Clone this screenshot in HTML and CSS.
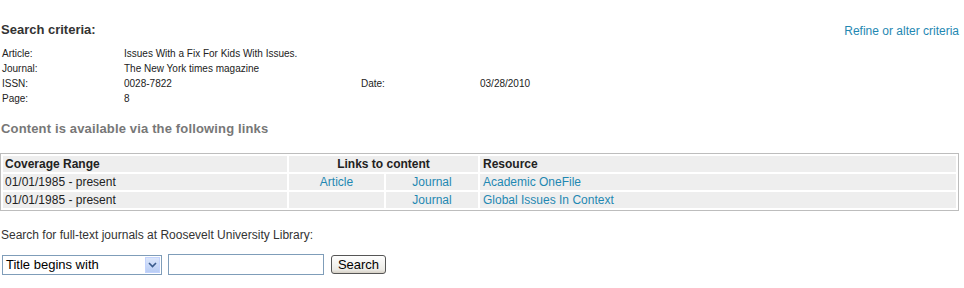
FILE: index.html
```html
<!DOCTYPE html>
<html>
<head>
<meta charset="utf-8">
<link rel="stylesheet" href="styles.css">
</head>
<body>
<div class="page">
  <div class="crit-head">
    <h3 class="title">Search criteria:</h3>
    <a class="link refine" href="#">Refine or alter criteria</a>
  </div>
  <table class="criteria">
    <tr><td class="lbl">Article:</td><td class="val" colspan="3">Issues With a Fix For Kids With Issues.</td></tr>
    <tr><td class="lbl">Journal:</td><td class="val" colspan="3">The New York times magazine</td></tr>
    <tr><td class="lbl">ISSN:</td><td class="val">0028-7822</td><td class="lbl2">Date:</td><td class="val">03/28/2010</td></tr>
    <tr><td class="lbl">Page:</td><td class="val" colspan="3">8</td></tr>
  </table>
  <h3 class="subtitle">Content is available via the following links</h3>
  <table class="results">
    <tr class="hdr">
      <th class="c1">Coverage Range</th>
      <th class="cl" colspan="2">Links to content</th>
      <th class="c4">Resource</th>
    </tr>
    <tr>
      <td class="c1">01/01/1985 - present</td>
      <td class="c2"><a class="link" href="#">Article</a></td>
      <td class="c3"><a class="link" href="#">Journal</a></td>
      <td class="c4"><a class="link" href="#">Academic OneFile</a></td>
    </tr>
    <tr>
      <td class="c1">01/01/1985 - present</td>
      <td class="c2"></td>
      <td class="c3"><a class="link" href="#">Journal</a></td>
      <td class="c4"><a class="link" href="#">Global Issues In Context</a></td>
    </tr>
  </table>
  <p class="search-label">Search for full-text journals at Roosevelt University Library:</p>
  <form class="search-form">
    <div class="select">
      <span class="select-text">Title begins with</span>
      <span class="select-btn"><svg width="9" height="6" viewBox="0 0 9 6"><path d="M1 1 L4.5 4.5 L8 1" fill="none" stroke="#3a5b8c" stroke-width="1.6"/></svg></span>
    </div>
    <input class="text-input" type="text">
    <button class="btn" type="button">Search</button>
  </form>
</div>
</body>
</html>
```

FILE: styles.css
```css
html, body {
  margin: 0;
  padding: 0;
  background: #fff;
}
body {
  font-family: "Liberation Sans", Arial, sans-serif;
  font-size: 12px;
  color: #333;
}
.page {
  width: 958px;
  padding: 0 0 0 1px;
}
.link {
  color: #1f88b2;
  text-decoration: none;
}
.crit-head {
  display: flex;
  justify-content: space-between;
  align-items: flex-start;
  padding-top: 22px;
  height: 24px;
}
.title {
  margin: 0;
  font-size: 13px;
  line-height: 16px;
  font-weight: bold;
  color: #333;
}
.refine {
  font-size: 12px;
  line-height: 16px;
  margin-top: 1px;
}
.criteria {
  border-collapse: collapse;
  font-size: 10px;
  color: #222;
}
.criteria td {
  padding: 0;
  height: 15px;
  line-height: 15px;
  vertical-align: middle;
}
.criteria .lbl {
  width: 122px;
  padding-left: 1px;
}
.criteria .val {
  width: 237px;
}
.criteria .lbl2 {
  width: 119px;
}
.subtitle {
  margin: 15px 0 0 0;
  font-size: 13px;
  line-height: 16px;
  font-weight: bold;
  color: #777;
  letter-spacing: 0.15px;
}
.results {
  margin-top: 16px;
  width: 959px;
  margin-left: -1px;
  border: 1px solid #bdbdbd;
  border-spacing: 2px;
  font-size: 12px;
  color: #222;
}
.results th, .results td {
  background: #eeeeee;
  height: 16px;
  padding: 0 2px;
  line-height: 16px;
}
.results th {
  font-weight: bold;
  text-align: left;
}
.results .c1 { width: 280px; }
.results .cl { text-align: center; }
.results .c2 { width: 91px; text-align: center; }
.results .c3 { width: 88px; text-align: center; }
.results .c4 { padding-left: 3px; }
.search-label {
  margin: 16px 0 0 0;
  line-height: 16px;
  font-size: 12px;
  color: #333;
}
.search-form {
  display: flex;
  align-items: center;
  margin-top: 11px;
}
.select {
  display: flex;
  align-items: center;
  justify-content: space-between;
  box-sizing: border-box;
  width: 160px;
  height: 20px;
  border: 1px solid #7f9db9;
  margin-left: 1px;
  background: #fff;
  font-size: 13px;
  color: #000;
}
.select-text {
  padding-left: 3px;
}
.select-btn {
  display: flex;
  align-items: center;
  justify-content: center;
  width: 15px;
  height: 16px;
  margin-right: 1px;
  background: linear-gradient(#dbe6fb, #b9cdf5);
  border: 1px solid #c3d3fd;
  box-sizing: border-box;
}
.text-input {
  box-sizing: border-box;
  width: 156px;
  height: 21px;
  margin: 0 0 0 6px;
  border: 1px solid #7f9db9;
  padding: 0;
}
.btn {
  box-sizing: border-box;
  margin-left: 7px;
  height: 19px;
  width: 55px;
  padding: 0;
  border: 1px solid #555;
  border-radius: 3px;
  background: linear-gradient(#fefefe, #ecebe6 80%, #d6d0c5);
  font-family: "Liberation Sans", Arial, sans-serif;
  font-size: 13px;
  color: #000;
}
```
